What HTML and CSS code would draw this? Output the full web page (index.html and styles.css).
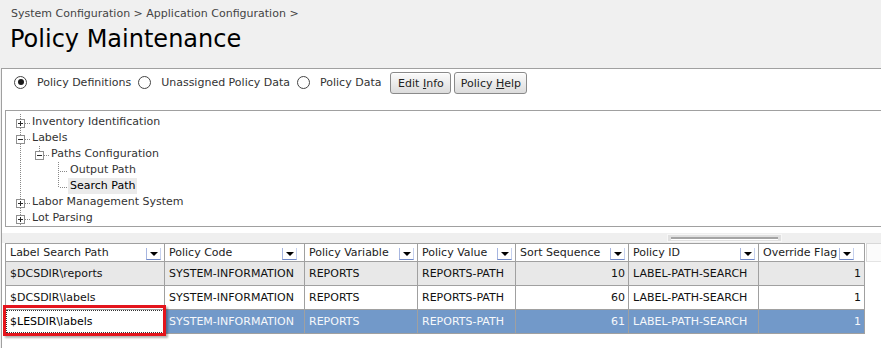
FILE: index.html
```html
<!DOCTYPE html>
<html lang="en">
<head>
    <meta charset="UTF-8">
    <title>Policy Maintenance</title>
    <link rel="stylesheet" href="styles.css">
</head>
<body>

<!-- page heading -->
<div class="page-head">
    <div class="crumbs">System Configuration &gt; Application Configuration &gt;</div>
    <h1 class="title">Policy Maintenance</h1>
</div>

<div class="panel">
    <!-- mode switch + buttons -->
    <div class="mode-bar">
        <span class="radio checked"></span><span class="radio-label">Policy Definitions</span>
        <span class="radio"></span><span class="radio-label">Unassigned Policy Data</span>
        <span class="radio"></span><span class="radio-label">Policy Data</span>
        <button class="btn btn-edit">Edit <u>I</u>nfo</button>
        <button class="btn btn-help">Policy <u>H</u>elp</button>
    </div>

    <!-- policy tree -->
    <div class="tree">
        <div class="tree-row">
            <svg class="twig" width="24" height="16" viewBox="0 0 24 16">
                <path class="dots" d="M14.5 0V16M19 9.5H24"/>
                <rect class="box" x="10.5" y="5.5" width="8" height="8"/>
                <path class="sign" d="M12 9.5H17M14.5 7V12"/>
            </svg>
            <span class="tree-label">Inventory Identification</span>
        </div>
        <div class="tree-row">
            <svg class="twig" width="24" height="16" viewBox="0 0 24 16">
                <path class="dots" d="M14.5 0V16M19 9.5H24"/>
                <rect class="box" x="10.5" y="5.5" width="8" height="8"/>
                <path class="sign" d="M12 9.5H17"/>
            </svg>
            <span class="tree-label">Labels</span>
        </div>
        <div class="tree-row">
            <svg class="twig" width="43" height="16" viewBox="0 0 43 16">
                <path class="dots" d="M14.5 0V16M33.5 0V5M38 9.5H43"/>
                <rect class="box" x="29.5" y="5.5" width="8" height="8"/>
                <path class="sign" d="M31 9.5H36"/>
            </svg>
            <span class="tree-label">Paths Configuration</span>
        </div>
        <div class="tree-row">
            <svg class="twig" width="62" height="16" viewBox="0 0 62 16">
                <path class="dots" d="M14.5 0V16M52.5 0V16M54 9.5H62"/>
            </svg>
            <span class="tree-label">Output Path</span>
        </div>
        <div class="tree-row">
            <svg class="twig" width="62" height="16" viewBox="0 0 62 16">
                <path class="dots" d="M14.5 0V16M52.5 0V10M54 9.5H62"/>
            </svg>
            <span class="tree-label current">Search Path</span>
        </div>
        <div class="tree-row">
            <svg class="twig" width="24" height="16" viewBox="0 0 24 16">
                <path class="dots" d="M14.5 0V16M19 9.5H24"/>
                <rect class="box" x="10.5" y="5.5" width="8" height="8"/>
                <path class="sign" d="M12 9.5H17M14.5 7V12"/>
            </svg>
            <span class="tree-label">Labor Management System</span>
        </div>
        <div class="tree-row">
            <svg class="twig" width="24" height="16" viewBox="0 0 24 16">
                <path class="dots" d="M14.5 0V16M19 9.5H24"/>
                <rect class="box" x="10.5" y="5.5" width="8" height="8"/>
                <path class="sign" d="M12 9.5H17M14.5 7V12"/>
            </svg>
            <span class="tree-label">Lot Parsing</span>
        </div>
    </div>

    <!-- horizontal scroller of the grid -->
    <div class="hscroll"><div class="hscroll-thumb"></div></div>

    <!-- policy grid -->
    <div class="grid">
        <div class="grid-row grid-head">
            <div class="cell c1">Label Search Path<span class="dd"></span></div>
            <div class="cell c2">Policy Code<span class="dd dd-wide"></span></div>
            <div class="cell c3">Policy Variable<span class="dd"></span></div>
            <div class="cell c4">Policy Value<span class="dd"></span></div>
            <div class="cell c5">Sort Sequence<span class="dd"></span></div>
            <div class="cell c6">Policy ID<span class="dd"></span></div>
            <div class="cell c7">Override Flag<span class="dd dd-far"></span></div>
            <div class="head-fill"></div>
        </div>
        <div class="grid-row row-alt">
            <div class="cell c1">$DCSDIR\reports</div>
            <div class="cell c2">SYSTEM-INFORMATION</div>
            <div class="cell c3">REPORTS</div>
            <div class="cell c4">REPORTS-PATH</div>
            <div class="cell c5 num">10</div>
            <div class="cell c6">LABEL-PATH-SEARCH</div>
            <div class="cell c7 num">1</div>
        </div>
        <div class="grid-row">
            <div class="cell c1">$DCSDIR\labels</div>
            <div class="cell c2">SYSTEM-INFORMATION</div>
            <div class="cell c3">REPORTS</div>
            <div class="cell c4">REPORTS-PATH</div>
            <div class="cell c5 num">60</div>
            <div class="cell c6">LABEL-PATH-SEARCH</div>
            <div class="cell c7 num">1</div>
        </div>
        <div class="grid-row row-sel">
            <div class="cell c1 edit">
                <div class="edit-box">$LESDIR\labels<span class="mark"></span></div>
            </div>
            <div class="cell c2">SYSTEM-INFORMATION</div>
            <div class="cell c3">REPORTS</div>
            <div class="cell c4">REPORTS-PATH</div>
            <div class="cell c5 num">61</div>
            <div class="cell c6">LABEL-PATH-SEARCH</div>
            <div class="cell c7 num">1</div>
        </div>
    </div>
</div>

</body>
</html>
```

FILE: styles.css
```css
/* page */
body {
    margin: 0;
    height: 348px;
    overflow: hidden;
    background-color: #f0f0f0;
    font-family: "DejaVu Sans", Verdana, sans-serif;
    font-size: 11px;
    color: #333;
}

/* heading */
.page-head {
    height: 61px;
    padding: 7px 0 0 11px;
}
.crumbs {
    line-height: 13px;
    color: #444;
}
.title {
    margin: 5px 0 0 -1px;
    font-size: 24px;
    font-weight: normal;
    line-height: 28px;
    color: #000;
}

/* white work area */
.panel {
    height: 279px;
    margin-left: 1px;
    background-color: #fff;
    border-top: 1px solid #a0a0a0;
    border-left: 1px solid #a0a0a0;
}

.mode-bar {
    display: flex;
    align-items: center;
    height: 22px;
    padding: 3px 0 0 12px;
}
.radio {
    box-sizing: border-box;
    width: 13px;
    height: 13px;
    margin-bottom: 2px;
    border: 1px solid #444;
    border-radius: 50%;
    display: flex;
    align-items: center;
    justify-content: center;
}
.radio.checked::after {
    content: "";
    width: 6px;
    height: 6px;
    border-radius: 50%;
    background-color: #1a1a1a;
}
.radio-label {
    margin: 0 7px 2px 10px;
    white-space: nowrap;
}
.btn {
    box-sizing: border-box;
    height: 22px;
    margin-left: 3px;
    padding: 0;
    font-family: inherit;
    font-size: 11px;
    color: #222;
    background: linear-gradient(#fbfbfb, #dcdcdc);
    border: 1px solid #8a8a8a;
    border-radius: 3px;
    box-shadow: inset 0 1px #fff;
}
.btn-edit {
    width: 61px;
    margin-left: 2px;
}
.btn-help {
    width: 73px;
}

/* tree */
.tree {
    height: 112px;
    margin: 16px 0 0 3px;
    padding-top: 3px;
    border: 1px solid #a0a0a0;
    border-right: none;
}
.tree-row {
    display: flex;
    align-items: center;
    height: 16px;
    white-space: nowrap;
}
.twig {
    flex: none;
    shape-rendering: crispEdges;
}
.twig .dots {
    fill: none;
    stroke: #888;
    stroke-dasharray: 1 1;
}
.twig .box {
    fill: #fff;
    stroke: #8f8f8f;
}
.twig .sign {
    fill: none;
    stroke: #2a2a2a;
}
.tree-label {
    padding: 0 2px;
    line-height: 16px;
}
.tree-label.current {
    background-color: #ebebeb;
    color: #000;
}

/* scroller */
.hscroll {
    display: flex;
    align-items: center;
    height: 10px;
    margin-top: 6px;
    background-color: #efefef;
}
.hscroll-thumb {
    box-sizing: border-box;
    width: 115px;
    height: 8px;
    margin-left: 665px;
    padding: 0 3px;
    display: flex;
    align-items: center;
    background-color: #e0e0e0;
    border: 1px solid #f7f7f7;
}
.hscroll-thumb::before {
    content: "";
    flex: 1;
    height: 2px;
    background-color: #a4a4a4;
    border-bottom: 1px solid #fff;
}

/* grid */
.grid {
    margin-left: 3px;
    border-left: 1px solid #a0a0a0;
}
.grid-row {
    display: flex;
}
.cell {
    box-sizing: border-box;
    height: 24px;
    padding: 0 3px 0 4px;
    display: flex;
    align-items: center;
    white-space: nowrap;
    overflow: hidden;
    color: #111;
    border-right: 1px solid #a0a0a0;
    border-bottom: 1px solid #a0a0a0;
}
.c1 { width: 159px; }
.c2 { width: 140px; }
.c3 { width: 113px; }
.c4 { width: 98px; }
.c5 { width: 113px; }
.c6 { width: 130px; }
.c7 { width: 106px; }
.num {
    justify-content: flex-end;
}

.grid-head .cell {
    height: 19px;
    background-color: #fff;
    border-top: 1px solid #a0a0a0;
    color: #222;
}
.head-fill {
    flex: 1;
    height: 19px;
    box-sizing: border-box;
    margin-left: 1px;
    background-color: #fbfbfb;
    border-top: 1px solid #d8d8d8;
    border-left: 1px solid #d8d8d8;
    border-bottom: 1px solid #e4e4e4;
}
.dd {
    box-sizing: border-box;
    flex: none;
    width: 15px;
    height: 12px;
    margin: 0 0 1px auto;
    align-self: flex-end;
    display: flex;
    align-items: center;
    justify-content: center;
    border-left: 1px solid #a7b6e0;
    border-right: 1px solid #c6d1ee;
    border-bottom: 1px solid #6f88c9;
}
.dd::after {
    content: "";
    border-left: 4px solid transparent;
    border-right: 4px solid transparent;
    border-top: 4px solid #000;
}
.dd-wide {
    margin-right: 4px;
}
.dd-far {
    margin-left: 2px;
}

.row-alt .cell {
    background-color: #e8e8e8;
}
.row-sel .cell {
    background-color: #7299c9;
    color: #f6f8fb;
}
.row-sel .cell.edit {
    padding: 0;
    overflow: visible;
    background-color: #fff;
}
.edit-box {
    flex: 1;
    align-self: stretch;
    position: relative;
    padding-left: 3px;
    display: flex;
    align-items: center;
    color: #000;
    border: 1px dotted #333;
}
/* red annotation frame around the edited cell */
.mark {
    position: absolute;
    left: -4px;
    top: -6px;
    box-sizing: border-box;
    width: 163px;
    height: 31px;
    border: 3px solid #e4141c;
    box-shadow: 2px 2px 2px rgba(0, 0, 0, 0.3);
}
```
